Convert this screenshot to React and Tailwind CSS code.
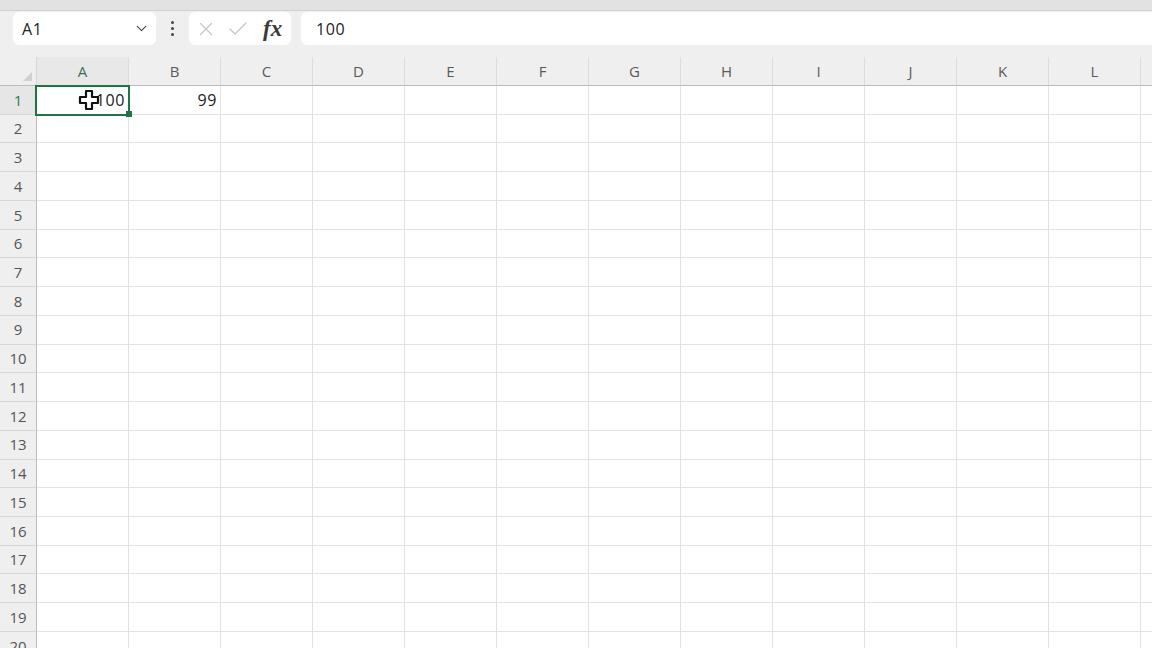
import React from "react";
import { ChevronDown, X, Check } from "lucide-react";

const COLS = ["A", "B", "C", "D", "E", "F", "G", "H", "I", "J", "K", "L", ""];
const ROWS = Array.from({ length: 21 }, (_, i) => i + 1);

function Cursor() {
  return (
    <svg width="22" height="22" viewBox="0 0 22 22" className="absolute left-[78px] top-[89px]">
      <path
        d="M8 2h6v6h6v6h-6v6H8v-6H2V8h6z"
        fill="#ffffff"
        stroke="#111111"
        strokeWidth="2.2"
        strokeLinejoin="round"
      />
    </svg>
  );
}

export default function App() {
  return (
    <div className="relative w-[1152px] h-[648px] overflow-hidden bg-white font-['Open_Sans',_'Noto_Sans',_sans-serif] text-[#222]">
      {/* top strip */}
      <div className="h-[11px] bg-[#e2e2e2] border-b border-[#d0d0d0]" />
      {/* formula bar */}
      <div className="flex items-start h-[46px] bg-[#efefef] pl-[13px] pt-[1px]">
        <div className="flex items-center justify-between w-[143px] h-[33px] bg-white rounded-[6px] pl-[9px] pr-[6px]">
          <span className="text-[16px] tracking-[0.6px] leading-none text-[#222]">A1</span>
          <ChevronDown size={17} strokeWidth={1.6} className="text-[#444]" />
        </div>
        <div className="flex flex-col items-center justify-center gap-[3px] w-[33px] h-[33px]">
          <span className="w-[3px] h-[3px] rounded-full bg-[#444]" />
          <span className="w-[3px] h-[3px] rounded-full bg-[#444]" />
          <span className="w-[3px] h-[3px] rounded-full bg-[#444]" />
        </div>
        <div className="flex items-center w-[102px] h-[33px] bg-white rounded-[6px] pl-[6px]">
          <X size={22} strokeWidth={1.3} className="text-[#c4c4c4]" />
          <Check size={24} strokeWidth={1.3} className="text-[#c4c4c4] ml-[9px]" />
          <span className="ml-[13px] font-['Liberation_Serif',_serif] italic font-semibold text-[23px] leading-none text-[#3a3a3a]">
            fx
          </span>
        </div>
        <div className="flex items-center flex-1 h-[33px] ml-[10px] bg-white rounded-l-[6px] pl-[15px]">
          <span className="text-[16px] tracking-[0.6px] leading-none text-[#222]">100</span>
        </div>
      </div>
      {/* column header */}
      <div className="flex h-[29px] bg-[#efefef] border-b border-[#bcbcbc]">
        <div className="relative w-[37px] shrink-0 border-r border-[#d6d6d6]">
          <div className="absolute right-[4px] bottom-[4px] w-0 h-0 border-l-[9px] border-l-transparent border-b-[9px] border-b-[#d0d0d0]" />
        </div>
        {COLS.map((c, i) => (
          <div
            key={i}
            className={`w-[92px] shrink-0 flex items-center justify-center border-r border-[#dcdcdc] text-[15px] ${
              c === "A" ? "bg-[#e8e8e8] text-[#3f6f53]" : "text-[#5a5a5a]"
            }`}
          >
            {c}
          </div>
        ))}
      </div>
      {/* rows */}
      <div className="flex flex-col">
        {ROWS.map((r) => (
          <div key={r} className="flex h-[28.74px] shrink-0">
            <div
              className={`w-[37px] shrink-0 flex items-center justify-center border-r border-b text-[15px] border-r-[#bcbcbc] border-b-[#d8d8d8] ${
                r === 1 ? "bg-[#e6e6e6] text-[#2f7a4f]" : "bg-[#efefef] text-[#555]"
              }`}
            >
              {r}
            </div>
            {COLS.map((c, i) => (
              <div
                key={i}
                className="w-[92px] shrink-0 flex items-center justify-end pr-[3px] border-r border-b border-[#e2e2e2] text-[16px] tracking-[0.6px] text-[#222]"
              >
                {r === 1 && c === "A" ? "100" : r === 1 && c === "B" ? "99" : ""}
              </div>
            ))}
          </div>
        ))}
      </div>
      {/* selection */}
      <div className="absolute left-[35px] top-[85px] w-[95px] h-[31px] border-2 border-[#217346]" />
      <div className="absolute left-[126px] top-[111px] w-[6px] h-[6px] bg-[#217346]" />
      <Cursor />
    </div>
  );
}
